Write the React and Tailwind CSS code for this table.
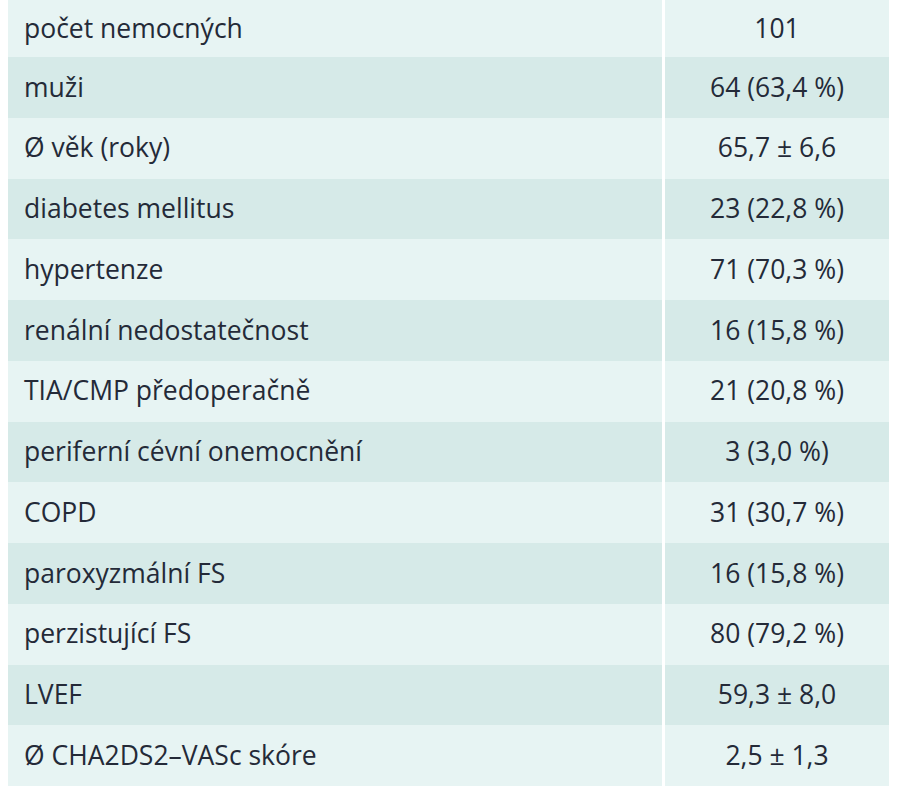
const rows = [
  ["počet nemocných", "101"],
  ["muži", "64 (63,4 %)"],
  ["Ø věk (roky)", "65,7 ± 6,6"],
  ["diabetes mellitus", "23 (22,8 %)"],
  ["hypertenze", "71 (70,3 %)"],
  ["renální nedostatečnost", "16 (15,8 %)"],
  ["TIA/CMP předoperačně", "21 (20,8 %)"],
  ["periferní cévní onemocnění", "3 (3,0 %)"],
  ["COPD", "31 (30,7 %)"],
  ["paroxyzmální FS", "16 (15,8 %)"],
  ["perzistující FS", "80 (79,2 %)"],
  ["LVEF", "59,3 ± 8,0"],
  ["Ø CHA2DS2–VASc skóre", "2,5 ± 1,3"],
];

export default function App() {
  return (
    <div className="w-[900px] h-[800px] bg-white pl-2 font-['Open_Sans',sans-serif] text-[26.5px] font-medium text-[#242a38]">
      <div className="w-[881px] flex flex-col">
        {rows.map(([label, value], i) => {
          const bg = i % 2 === 0 ? "bg-[#e7f4f3]" : "bg-[#d6eae8]";
          return (
            <div key={i} className={`flex gap-[3px] ${i === 0 ? "h-[57px]" : "h-[60.75px]"}`}>
              <div className={`w-[654px] flex items-center pl-4 ${bg}`}>{label}</div>
              <div className={`w-[224px] flex items-center justify-center ${bg}`}>{value}</div>
            </div>
          );
        })}
      </div>
    </div>
  );
}
